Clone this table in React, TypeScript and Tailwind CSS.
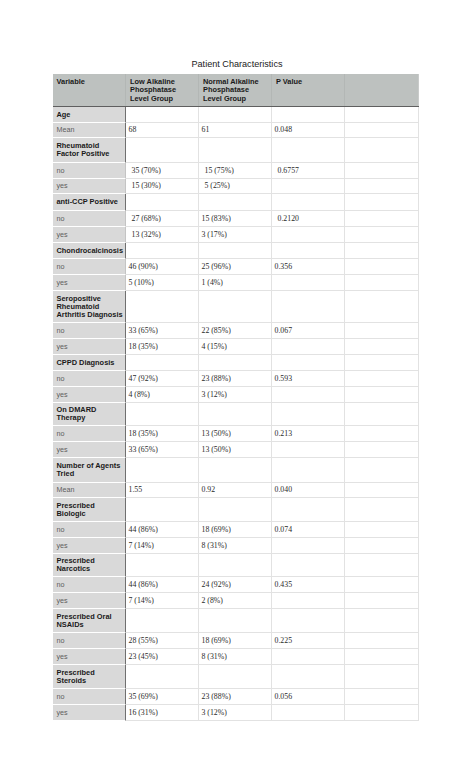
import React from "react";

type Row = {
  label: string[];
  bold?: boolean;
  h: number;
  v?: [string, string, string];
  ind?: [boolean, boolean, boolean];
  light?: boolean;
};

const H: Record<number, string> = {
  15: "h-[15px]",
  16: "h-[16px]",
  17: "h-[17px]",
  23: "h-[23px]",
  24: "h-[24px]",
  25: "h-[25px]",
  32: "h-[32px]",
};

const rows: Row[] = [
  { label: ["Age"], bold: true, h: 16 },
  { label: ["Mean"], h: 15, v: ["68", "61", "0.048"] },
  { label: ["Rheumatoid", "Factor Positive"], bold: true, h: 25 },
  { label: ["no"], h: 16, v: ["35 (70%)", "15 (75%)", "0.6757"], ind: [true, true, true], light: true },
  { label: ["yes"], h: 15, v: ["15 (30%)", "5 (25%)", ""], ind: [true, true, false], light: true },
  { label: ["anti-CCP Positive"], bold: true, h: 17 },
  { label: ["no"], h: 16, v: ["27 (68%)", "15 (83%)", "0.2120"], ind: [true, false, true], light: true },
  { label: ["yes"], h: 16, v: ["13 (32%)", "3 (17%)", ""], ind: [true, false, false], light: true },
  { label: ["Chondrocalcinosis"], bold: true, h: 16 },
  { label: ["no"], h: 16, v: ["46 (90%)", "25 (96%)", "0.356"], light: true },
  { label: ["yes"], h: 16, v: ["5 (10%)", "1 (4%)", ""], light: true },
  { label: ["Seropositive", "Rheumatoid", "Arthritis Diagnosis"], bold: true, h: 32 },
  { label: ["no"], h: 16, v: ["33 (65%)", "22 (85%)", "0.067"] },
  { label: ["yes"], h: 16, v: ["18 (35%)", "4 (15%)", ""] },
  { label: ["CPPD Diagnosis"], bold: true, h: 16 },
  { label: ["no"], h: 16, v: ["47 (92%)", "23 (88%)", "0.593"] },
  { label: ["yes"], h: 16, v: ["4 (8%)", "3 (12%)", ""] },
  { label: ["On DMARD", "Therapy"], bold: true, h: 23 },
  { label: ["no"], h: 16, v: ["18 (35%)", "13 (50%)", "0.213"] },
  { label: ["yes"], h: 16, v: ["33 (65%)", "13 (50%)", ""] },
  { label: ["Number of Agents", "Tried"], bold: true, h: 25 },
  { label: ["Mean"], h: 15, v: ["1.55", "0.92", "0.040"] },
  { label: ["Prescribed", "Biologic"], bold: true, h: 24 },
  { label: ["no"], h: 16, v: ["44 (86%)", "18 (69%)", "0.074"] },
  { label: ["yes"], h: 16, v: ["7 (14%)", "8 (31%)", ""] },
  { label: ["Prescribed", "Narcotics"], bold: true, h: 23 },
  { label: ["no"], h: 16, v: ["44 (86%)", "24 (92%)", "0.435"] },
  { label: ["yes"], h: 16, v: ["7 (14%)", "2 (8%)", ""] },
  { label: ["Prescribed Oral", "NSAIDs"], bold: true, h: 24 },
  { label: ["no"], h: 16, v: ["28 (55%)", "18 (69%)", "0.225"] },
  { label: ["yes"], h: 16, v: ["23 (45%)", "8 (31%)", ""] },
  { label: ["Prescribed", "Steroids"], bold: true, h: 24 },
  { label: ["no"], h: 16, v: ["35 (69%)", "23 (88%)", "0.056"] },
  { label: ["yes"], h: 16, v: ["16 (31%)", "3 (12%)", ""] },
];

const sans = "font-['Liberation_Sans',Arial,sans-serif]";
const serif = "font-['Liberation_Serif','Times_New_Roman',serif]";

function Header() {
  const heads: string[][] = [
    ["Variable"],
    ["Low Alkaline", "Phosphatase", "Level Group"],
    ["Normal Alkaline", "Phosphatase", "Level Group"],
    ["P Value"],
    [],
  ];
  return (
    <div className="grid h-[33px] grid-cols-[73px_73px_73px_73px_74px] border-b border-b-[#5f5f5f] bg-[#bdc1bf]">
      {heads.map((lines, i) => (
        <div
          key={i}
          className={`flex flex-col pt-[4px] ${i === 0 ? "pl-[3.5px]" : "pl-[4px]"} ${
            i < 4 ? "border-r border-r-[#b3b7b5]" : "border-r border-r-[#c9cbca]"
          } ${sans} text-[7.4px] font-bold leading-[8.3px] text-[#1a1a1a]`}
        >
          {lines.map((l, j) => (
            <span key={j} className="whitespace-nowrap">
              {l}
            </span>
          ))}
        </div>
      ))}
    </div>
  );
}

function BodyRow({ r }: { r: Row }) {
  const vals = r.v ?? ["", "", ""];
  const ind = r.ind ?? [false, false, false];
  return (
    <div className={`grid ${H[r.h]} grid-cols-[73px_73px_73px_73px_74px]`}>
      <div
        className={`flex flex-col justify-center border-b border-b-white border-r ${
          r.light ? "border-r-[#c4c4c4]" : "border-r-[#707070]"
        } bg-[#d9d9d9] pl-[3.5px] ${sans} ${
          r.bold
            ? "text-[7.4px] font-bold leading-[8px] text-[#1a1a1a]"
            : "text-[7.2px] leading-[8px] text-[#5e5e5e]"
        }`}
      >
        {r.label.map((l, j) => (
          <span key={j} className="whitespace-nowrap">
            {l}
          </span>
        ))}
      </div>
      {vals.map((v, i) => (
        <div
          key={i}
          className={`flex items-center border-b border-r border-[#e2e2e2] ${
            ind[i] ? "pl-[5.5px]" : "pl-[2.5px]"
          } ${serif} whitespace-nowrap text-[7.8px] leading-[8px] text-[#2a2a2a]`}
        >
          {v}
        </div>
      ))}
      <div className="border-b border-r border-[#e2e2e2]" />
    </div>
  );
}

export default function App() {
  return (
    <div className="min-h-screen w-[474px] bg-white">
      <div className="pt-[58px]">
        <div
          className={`h-[12px] text-center ${sans} text-[9.1px] leading-[12px] text-[#222]`}
        >
          Patient Characteristics
        </div>
        <div className="ml-[53px] mt-[4px] flex w-[366px] flex-col">
          <Header />
          {rows.map((r, i) => (
            <BodyRow key={i} r={r} />
          ))}
        </div>
      </div>
    </div>
  );
}
